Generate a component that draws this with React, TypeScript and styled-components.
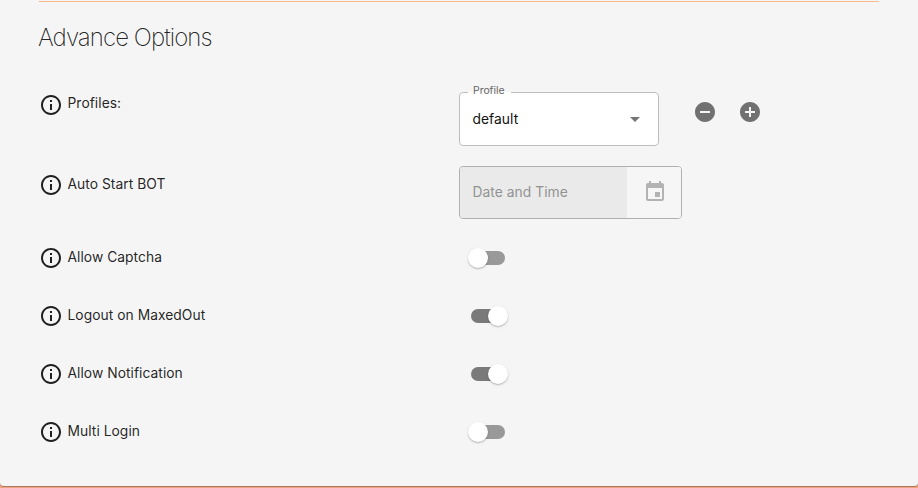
import React from "react";
import styled, { createGlobalStyle } from "styled-components";

const GlobalStyle = createGlobalStyle`
  *, *::before, *::after { box-sizing: border-box; }
  body { margin: 0; background: #f0a37c; }
`;

const Card = styled.main`
  height: 487px;
  padding: 1px 39px 0;
  overflow: hidden;
  background: #f5f5f5;
  border-bottom: 1px solid #a87a64;
  border-radius: 0 0 4px 4px;
  color: rgba(0, 0, 0, 0.87);
  font-family: Inter, "Liberation Sans", sans-serif;
`;

const Divider = styled.hr`
  height: 1px;
  margin: 0;
  border: 0;
  background: #fabb8f;
`;

const Title = styled.h2`
  height: 32px;
  margin: 20px 0 39px -1px;
  font-size: 24px;
  font-weight: 200;
  line-height: 32px;
  letter-spacing: -0.93px;
`;

const Row = styled.div<{ $height: number }>`
  display: grid;
  grid-template-columns: 420px 1fr;
  height: ${(p) => p.$height}px;
`;

const Label = styled.div<{ $lineHeight: number }>`
  display: flex;
  gap: 4.5px;
  height: 24px;
  font-size: 13.8px;
  line-height: ${(p) => p.$lineHeight}px;
  letter-spacing: 0.05px;

  svg { flex: none; }
`;

const Icon = styled.svg`
  display: block;
  fill: currentColor;
`;

const Controls = styled.div`
  display: flex;
  align-items: flex-start;
`;

const SelectHolder = styled.div`
  margin-top: -7px;
`;

const Select = styled.fieldset`
  display: flex;
  justify-content: space-between;
  width: 200px;
  height: 60px;
  margin: 0;
  padding: 11px 11px 0 12.5px;
  border: 1px solid #bdbdbd;
  border-radius: 4px;
  color: #111;
  font-size: 13.8px;
  line-height: 20px;
  letter-spacing: 0.05px;
  background: #fff;
`;

const Legend = styled.legend`
  height: 12px;
  margin-left: -4.5px;
  padding: 0 6px 0 5px;
  color: #666;
  font-size: 10.4px;
  line-height: 10px;
  letter-spacing: 0;
`;

const SelectArrow = styled.span`
  height: 24px;
  margin-top: -2px;
  color: #757575;
`;

const Buttons = styled.div`
  display: flex;
  gap: 21px;
  margin: 7px 0 0 34px;
  color: #717171;
`;

const IconButton = styled.button`
  padding: 0;
  border: 0;
  background: none;
  color: inherit;
`;

const DateHolder = styled.div`
  margin-top: -7px;
`;

const DateField = styled.div`
  display: grid;
  grid-template-columns: 1fr 54px;
  width: 223px;
  height: 53px;
  overflow: hidden;
  border: 1px solid #b0b0b0;
  border-radius: 4px;
`;

const Placeholder = styled.div`
  padding: 15px 12.5px;
  background: #eaeaea;
  color: #929292;
  font-size: 13.8px;
  line-height: 21px;
  letter-spacing: 0.05px;
`;

const CalendarButton = styled.button`
  display: grid;
  place-items: center;
  padding: 0 0 2px 1px;
  border: 0;
  background: #f6f6f6;
  color: #b3b3b3;
`;

const Switch = styled.button<{ $on: boolean }>`
  display: flex;
  justify-content: ${(p) => (p.$on ? "flex-end" : "flex-start")};
  align-items: center;
  width: 34px;
  height: 14px;
  margin: 5px 0 0 12px;
  padding: 0;
  border: 0;
  border-radius: 7px;
  background: ${(p) => (p.$on ? "#7a7a7a" : "#999")};
`;

const Thumb = styled.span`
  flex: none;
  width: 20px;
  height: 20px;
  margin: 0 -3px;
  border-radius: 50%;
  background: #fff;
  box-shadow: 0 1px 1px rgba(0, 0, 0, 0.16), 0 1px 3px rgba(0, 0, 0, 0.13);
`;

const paths = {
  info: "M11 7h2v2h-2zm0 4h2v6h-2zm1-9C6.48 2 2 6.48 2 12s4.48 10 10 10 10-4.48 10-10S17.52 2 12 2m0 18c-4.41 0-8-3.59-8-8s3.59-8 8-8 8 3.59 8 8-3.59 8-8 8",
  arrow: "M7 10l5 5 5-5z",
  minus: "M12 2C6.48 2 2 6.48 2 12s4.48 10 10 10 10-4.48 10-10S17.52 2 12 2m5 11H7v-2h10z",
  plus: "M12 2C6.48 2 2 6.48 2 12s4.48 10 10 10 10-4.48 10-10S17.52 2 12 2m5 11h-4v4h-2v-4H7v-2h4V7h2v4h4z",
  calendar: "M17 12h-5v5h5zM16 1v2H8V1H6v2H5c-1.11 0-1.99.9-1.99 2L3 19c0 1.1.89 2 2 2h14c1.1 0 2-.9 2-2V5c0-1.1-.9-2-2-2h-1V1zm3 18H5V8h14z",
};

function Glyph({ name }: { name: keyof typeof paths }) {
  return (
    <Icon width="24" height="24" viewBox="0 0 24 24" aria-hidden="true">
      <path d={paths[name]} />
    </Icon>
  );
}

function InfoLabel({ text, lineHeight = 23 }: { text: string; lineHeight?: number }) {
  return (
    <Label $lineHeight={lineHeight}>
      <Glyph name="info" />
      {text}
    </Label>
  );
}

function ProfileSelect() {
  return (
    <SelectHolder>
      <Select>
        <Legend>Profile</Legend>
        default
        <SelectArrow><Glyph name="arrow" /></SelectArrow>
      </Select>
    </SelectHolder>
  );
}

const toggles = [
  { label: "Allow Captcha", on: false },
  { label: "Logout on MaxedOut", on: true },
  { label: "Allow Notification", on: true },
  { label: "Multi Login", on: false },
];

export default function App() {
  return (
    <>
      <GlobalStyle />
      <Card>
        <Divider />
        <Title>Advance Options</Title>
        <Row $height={80}>
          <InfoLabel text="Profiles:" lineHeight={21} />
          <Controls>
            <ProfileSelect />
            <Buttons>
              <IconButton aria-label="Remove profile"><Glyph name="minus" /></IconButton>
              <IconButton aria-label="Add profile"><Glyph name="plus" /></IconButton>
            </Buttons>
          </Controls>
        </Row>
        <Row $height={73}>
          <InfoLabel text="Auto Start BOT" />
          <DateHolder>
            <DateField>
              <Placeholder>Date and Time</Placeholder>
              <CalendarButton aria-label="Choose date" disabled><Glyph name="calendar" /></CalendarButton>
            </DateField>
          </DateHolder>
        </Row>
        {toggles.map(({ label, on }) => (
          <Row key={label} $height={58}>
            <InfoLabel text={label} />
            <Controls>
              <Switch $on={on} role="switch" aria-checked={on} aria-label={label}>
                <Thumb />
              </Switch>
            </Controls>
          </Row>
        ))}
      </Card>
    </>
  );
}
